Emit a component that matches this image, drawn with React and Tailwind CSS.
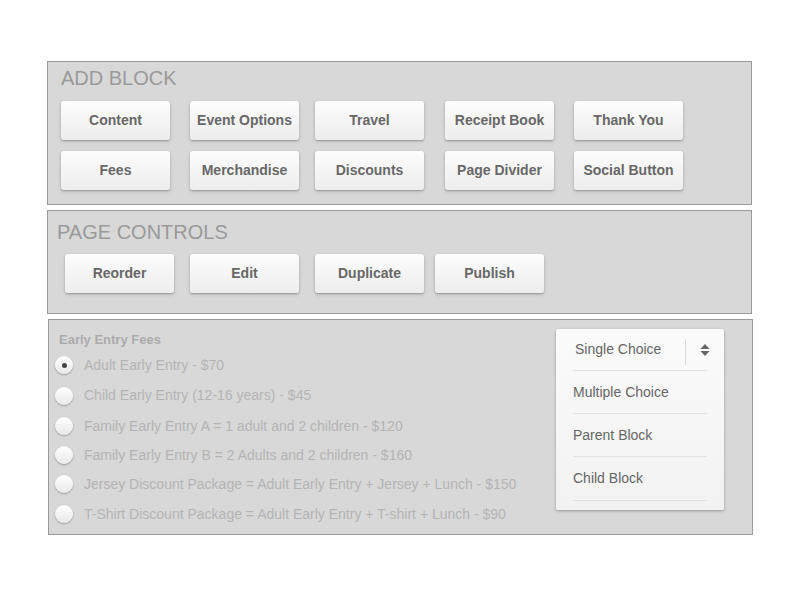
import React from 'react';

const addBlockRows = [
  [
    { label: 'Content', ml: 'ml-0' },
    { label: 'Event Options', ml: 'ml-[20px]' },
    { label: 'Travel', ml: 'ml-[16px]' },
    { label: 'Receipt Book', ml: 'ml-[21px]' },
    { label: 'Thank You', ml: 'ml-[20px]' },
  ],
  [
    { label: 'Fees', ml: 'ml-0' },
    { label: 'Merchandise', ml: 'ml-[20px]' },
    { label: 'Discounts', ml: 'ml-[16px]' },
    { label: 'Page Divider', ml: 'ml-[21px]' },
    { label: 'Social Button', ml: 'ml-[20px]' },
  ],
];

const pageControls = [
  { label: 'Reorder', ml: 'ml-0' },
  { label: 'Edit', ml: 'ml-[16px]' },
  { label: 'Duplicate', ml: 'ml-[16px]' },
  { label: 'Publish', ml: 'ml-[11px]' },
];

const fees = [
  { label: 'Adult Early Entry - $70', checked: true, h: 'h-[30px]' },
  { label: 'Child Early Entry (12-16 years) - $45', h: 'h-[31px]' },
  { label: 'Family Early Entry A = 1 adult and 2 children - $120', h: 'h-[30px]' },
  { label: 'Family Early Entry B = 2 Adults and 2 children - $160', h: 'h-[28px]' },
  { label: 'Jersey Discount Package = Adult Early Entry + Jersey + Lunch - $150', h: 'h-[30px]' },
  { label: 'T-Shirt Discount Package = Adult Early Entry + T-shirt + Lunch - $90', h: 'h-[30px]' },
];

const options = [
  { label: 'Multiple Choice', h: 'h-[43px]' },
  { label: 'Parent Block', h: 'h-[43px]' },
  { label: 'Child Block', h: 'h-[44px]' },
];

const SoftButton = ({ label, ml }) => (
  <button
    className={`${ml} w-[109px] h-[39px] shrink-0 rounded-[3px] bg-gradient-to-b from-[#fdfdfd] to-[#ededed] text-[14px] font-bold text-[#686868] shadow-[0_1px_2px_rgba(0,0,0,0.28),0_2px_5px_rgba(0,0,0,0.08)]`}
  >
    {label}
  </button>
);

const Radio = ({ checked }) => (
  <span className="w-[18px] h-[18px] rounded-full bg-gradient-to-b from-[#ffffff] to-[#e9e9e9] shadow-[0_1px_2px_rgba(0,0,0,0.3)] flex items-center justify-center shrink-0">
    {checked && <span className="w-[5px] h-[5px] rounded-full bg-[#444]" />}
  </span>
);

const App = () => {
  return (
    <div className="w-[800px] h-[600px] bg-white font-['Liberation_Sans',Arial,sans-serif]">
      <div className="pt-[61px] pl-[47px] w-[752px] flex flex-col gap-[5px]">

        {/* Add block */}
        <section className="w-[705px] h-[144px] border border-[#9a9a9a] bg-[#d8d8d8] pl-[13px] pt-[2px]">
          <h2 className="text-[20px] leading-[28px] text-[#9a9a9a] mb-[9px]">ADD BLOCK</h2>
          <div className="flex flex-col gap-[11px]">
            {addBlockRows.map((row, i) => (
              <div key={i} className="flex">
                {row.map((b) => (
                  <SoftButton key={b.label} {...b} />
                ))}
              </div>
            ))}
          </div>
        </section>

        {/* Page controls */}
        <section className="w-[705px] h-[104px] border border-[#9a9a9a] bg-[#d8d8d8] pl-[9px] pt-[7px]">
          <h2 className="text-[20px] leading-[28px] text-[#9a9a9a] mb-[8px]">PAGE CONTROLS</h2>
          <div className="flex pl-[8px]">
            {pageControls.map((b) => (
              <SoftButton key={b.label} {...b} />
            ))}
          </div>
        </section>

        {/* Fees + type select */}
        <section className="ml-px w-[705px] h-[216px] border border-[#9a9a9a] bg-[#d8d8d8] flex justify-between pr-[28px]">
          <div className="pl-[6px] pt-[11px]">
            <h3 className="pl-[4px] text-[13px] leading-[18px] font-bold text-[#ababab] mb-[1px]">Early Entry Fees</h3>
            {fees.map((f) => (
              <div key={f.label} className={`${f.h} flex items-center gap-[11px]`}>
                <Radio checked={f.checked} />
                <span className="text-[14px] text-[#b4b4b4] whitespace-nowrap">{f.label}</span>
              </div>
            ))}
          </div>

          <div className="mt-[9px] w-[168px] h-[181px] bg-gradient-to-b from-[#fbfbfb] to-[#f2f2f3] shadow-[0_1px_3px_rgba(0,0,0,0.3)] px-[17px] rounded-[2px]">
            <div className="h-[42px] border-b border-[#e2e2e4] flex items-center">
              <span className="pl-[2px] flex-1 text-[14px] text-[#666]">Single Choice</span>
              <span className="w-px h-[26px] bg-[#dedede] mt-[4px]" />
              <svg width="10" height="14" viewBox="0 0 10 14" className="ml-[14px] mr-[-3px]">
                <path d="M5 1 L9.5 6 L0.5 6 Z" fill="#666" />
                <path d="M0.5 8 L9.5 8 L5 13 Z" fill="#666" />
              </svg>
            </div>
            {options.map((o) => (
              <div key={o.label} className={`${o.h} border-b border-[#e2e2e4] flex items-center`}>
                <span className="text-[14px] text-[#666]">{o.label}</span>
              </div>
            ))}
          </div>
        </section>

      </div>
    </div>
  );
};

export default App;
